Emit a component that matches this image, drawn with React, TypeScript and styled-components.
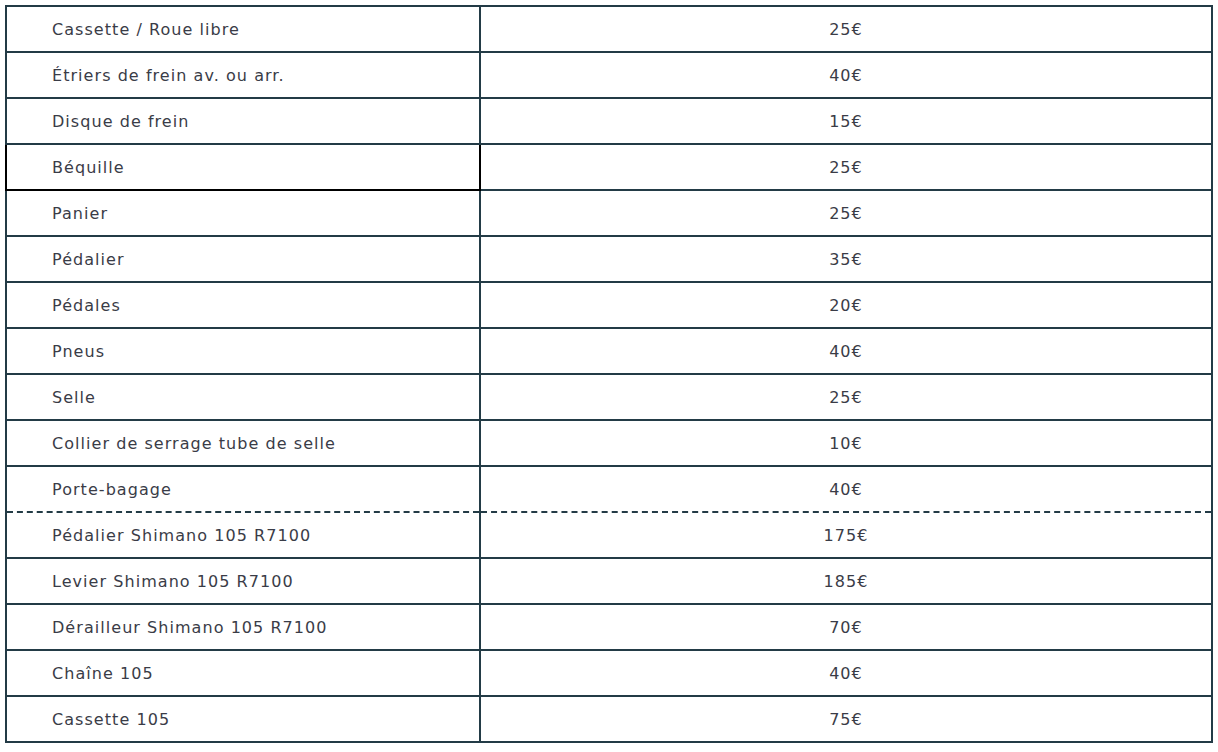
import React from "react";
import styled, { createGlobalStyle } from "styled-components";

const GlobalStyle = createGlobalStyle`
  html, body { margin: 0; padding: 0; background: #ffffff; }
  body { font-family: "DejaVu Sans", "Noto Sans", sans-serif; }
`;

const Page = styled.div`
  padding: 5px;
`;

const Table = styled.table`
  width: 100%;
  border-collapse: collapse;
  border: 2px solid #233b46;
  table-layout: fixed;
`;

type Edge = "solid" | "dashed";

const Row = styled.tr<{ $top: Edge; $bottom: Edge }>`
  & > td {
    border-top-style: ${(p) => p.$top};
    border-bottom-style: ${(p) => p.$bottom};
  }
`;

const Cell = styled.td`
  height: 44px;
  padding: 0;
  border: 2px solid #233b46;
  font-size: 16px;
  line-height: 19px;
  letter-spacing: 1.05px;
  color: #3a3c47;
  vertical-align: middle;
  white-space: nowrap;
`;

const NameCell = styled(Cell)<{ $active?: boolean }>`
  width: 427px;
  padding-left: 45px;
  text-align: left;
  border-color: ${(p) => (p.$active ? "#000000" : "#233b46")};
`;

const PriceCell = styled(Cell)`
  text-align: center;
`;

const items: { name: string; price: string }[] = [
  { name: "Cassette / Roue libre", price: "25€" },
  { name: "Étriers de frein av. ou arr.", price: "40€" },
  { name: "Disque de frein", price: "15€" },
  { name: "Béquille", price: "25€" },
  { name: "Panier", price: "25€" },
  { name: "Pédalier", price: "35€" },
  { name: "Pédales", price: "20€" },
  { name: "Pneus", price: "40€" },
  { name: "Selle", price: "25€" },
  { name: "Collier de serrage tube de selle", price: "10€" },
  { name: "Porte-bagage", price: "40€" },
  { name: "Pédalier Shimano 105 R7100", price: "175€" },
  { name: "Levier Shimano 105 R7100", price: "185€" },
  { name: "Dérailleur Shimano 105 R7100", price: "70€" },
  { name: "Chaîne 105", price: "40€" },
  { name: "Cassette 105", price: "75€" },
];

const DASH_AFTER = 10;

export default function App() {
  return (
    <>
      <GlobalStyle />
      <Page>
        <Table>
          <tbody>
            {items.map((it, i) => (
              <Row
                key={i}
                $top={i === DASH_AFTER + 1 ? "dashed" : "solid"}
                $bottom={i === DASH_AFTER ? "dashed" : "solid"}
              >
                <NameCell $active={i === 3}>{it.name}</NameCell>
                <PriceCell>{it.price}</PriceCell>
              </Row>
            ))}
          </tbody>
        </Table>
      </Page>
    </>
  );
}
